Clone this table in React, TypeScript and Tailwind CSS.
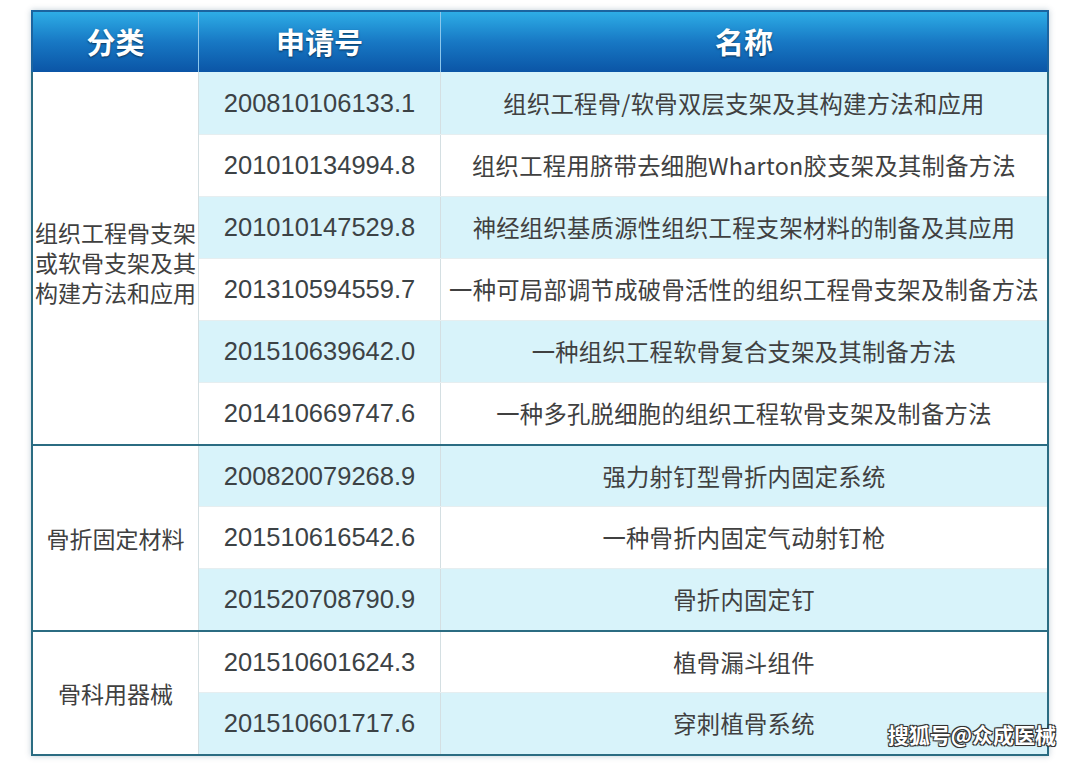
import React from "react";

type Row = { no: string; name: string };
type Group = { cat: string[]; rows: Row[] };

const groups: Group[] = [
  {
    cat: ["组织工程骨支架", "或软骨支架及其", "构建方法和应用"],
    rows: [
      { no: "200810106133.1", name: "组织工程骨/软骨双层支架及其构建方法和应用" },
      { no: "201010134994.8", name: "组织工程用脐带去细胞Wharton胶支架及其制备方法" },
      { no: "201010147529.8", name: "神经组织基质源性组织工程支架材料的制备及其应用" },
      { no: "201310594559.7", name: "一种可局部调节成破骨活性的组织工程骨支架及制备方法" },
      { no: "201510639642.0", name: "一种组织工程软骨复合支架及其制备方法" },
      { no: "201410669747.6", name: "一种多孔脱细胞的组织工程软骨支架及制备方法" },
    ],
  },
  {
    cat: ["骨折固定材料"],
    rows: [
      { no: "200820079268.9", name: "强力射钉型骨折内固定系统" },
      { no: "201510616542.6", name: "一种骨折内固定气动射钉枪" },
      { no: "201520708790.9", name: "骨折内固定钉" },
    ],
  },
  {
    cat: ["骨科用器械"],
    rows: [
      { no: "201510601624.3", name: "植骨漏斗组件" },
      { no: "201510601717.6", name: "穿刺植骨系统" },
    ],
  },
];

const font = { fontFamily: '"Noto Sans CJK SC", "Noto Sans", sans-serif' };
const catFont = { fontFamily: '"Liberation Sans", "Noto Sans CJK SC", sans-serif' };
const numFont = { fontFamily: '"Liberation Sans", Arial, sans-serif' };

export default function App() {
  let idx = 0;
  return (
    <div className="relative w-[1080px] h-[764px] bg-white overflow-hidden" style={font}>
      <div className="ml-[31px] mt-[10px] w-[1018px] shadow-[0_0_6px_rgba(0,60,90,0.25)]">
        {/* Header */}
        <div className="flex h-[62px] bg-gradient-to-b from-[#2eade6] via-[#1878c4] to-[#0b55a6] border-t-2 border-x-2 border-[#1b64a0] text-white font-bold text-[29px] [text-shadow:0_1px_2px_rgba(0,0,0,0.55)]">
          <div className="w-[166px] flex items-center justify-center border-r border-[#8cc7ec]">分类</div>
          <div className="w-[242px] flex items-center justify-center border-r border-[#8cc7ec]">申请号</div>
          <div className="flex-1 flex items-center justify-center">名称</div>
        </div>
        {/* Body */}
        <div className="border-x-2 border-b-2 border-[#2b6c82]">
          {groups.map((g, gi) => (
            <div key={gi} className={`flex ${gi > 0 ? "border-t-2 border-[#2b6c82]" : ""}`}>
              <div
                className={`w-[166px] flex items-center justify-center bg-white text-[23px] leading-[30px] text-[#404040] border-r border-[#d4dfe2] ${
                  gi === 0 ? "pt-[12px]" : ""
                }`}
                style={g.cat.length > 1 ? catFont : undefined}
              >
                <div className="whitespace-nowrap text-center">
                  {g.cat.map((c, ci) => (
                    <React.Fragment key={ci}>
                      {ci > 0 && <br />}
                      {c}
                    </React.Fragment>
                  ))}
                </div>
              </div>
              <div className="flex-1 flex flex-col">
                {g.rows.map((r, ri) => {
                  const cyan = idx % 2 === 0;
                  idx++;
                  const h = gi === 0 && ri === 0 ? "h-[62px]" : ri === 0 ? "h-[60px]" : "h-[62px]";
                  return (
                    <div
                      key={ri}
                      className={`flex ${h} ${cyan ? "bg-[#d8f3fa]" : "bg-white"} ${ri > 0 ? "border-t border-[#e6eef0]" : ""}`}
                    >
                      <div
                        className="w-[242px] flex items-center justify-center text-[25.5px] text-[#3c4245] border-r border-[#d4dfe2]"
                        style={numFont}
                      >
                        {r.no}
                      </div>
                      <div className="flex-1 flex items-center justify-center text-[23.3px] text-[#404040] whitespace-nowrap tracking-[0.3px]">
                        {r.name}
                      </div>
                    </div>
                  );
                })}
              </div>
            </div>
          ))}
        </div>
      </div>
      <div
        className="absolute right-[24px] bottom-[14px] text-white text-[21px] font-bold whitespace-nowrap [text-shadow:1px_1px_0_#333,-1px_-1px_0_#333,1px_-1px_0_#333,-1px_1px_0_#333,0_0_2px_#000]"
      >
        搜狐号@众成医械
      </div>
    </div>
  );
}
